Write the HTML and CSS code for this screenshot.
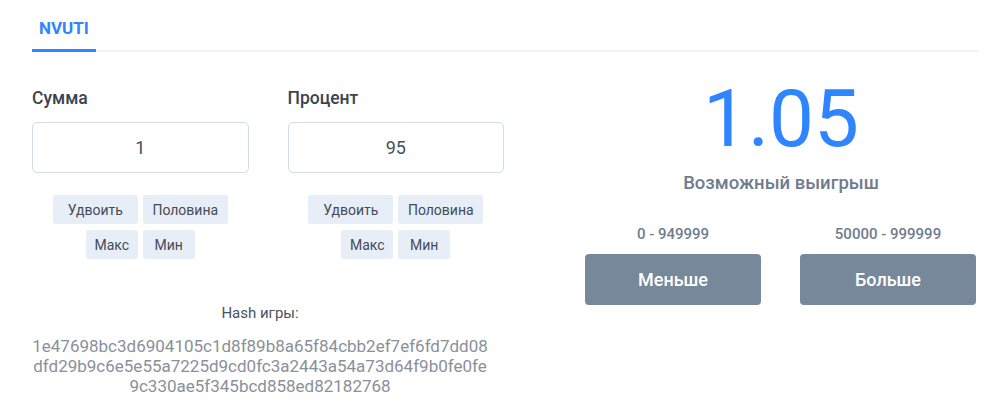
FILE: index.html
```html
<!DOCTYPE html>
<html lang="ru">
<head>
<meta charset="utf-8">
<title>NVUTI</title>
<link rel="stylesheet" href="styles.css">
</head>
<body>
<div class="page">
  <nav class="tabs">
    <a class="tab active">NVUTI</a>
  </nav>
  <main class="main">
    <section class="left">
      <div class="fields">
        <div class="field">
          <div class="label">Сумма</div>
          <div class="input">1</div>
          <div class="quick">
            <button class="qbtn wide">Удвоить</button>
            <button class="qbtn wide">Половина</button>
            <button class="qbtn narrow">Макс</button>
            <button class="qbtn narrow">Мин</button>
          </div>
        </div>
        <div class="field">
          <div class="label">Процент</div>
          <div class="input">95</div>
          <div class="quick">
            <button class="qbtn wide">Удвоить</button>
            <button class="qbtn wide">Половина</button>
            <button class="qbtn narrow">Макс</button>
            <button class="qbtn narrow">Мин</button>
          </div>
        </div>
      </div>
      <div class="hash">
        <div class="hash-label">Hash игры:</div>
        <div class="hash-value">1e47698bc3d6904105c1d8f89b8a65f84cbb2ef7ef6fd7dd08<br>dfd29b9c6e5e55a7225d9cd0fc3a2443a54a73d64f9b0fe0fe<br>9c330ae5f345bcd858ed82182768</div>
      </div>
    </section>
    <section class="right">
      <div class="win">1.05</div>
      <div class="win-label">Возможный выигрыш</div>
      <div class="bets">
        <div class="bet">
          <div class="range">0 - 949999</div>
          <button class="play">Меньше</button>
        </div>
        <div class="bet">
          <div class="range">50000 - 999999</div>
          <button class="play">Больше</button>
        </div>
      </div>
    </section>
  </main>
</div>
</body>
</html>
```
FILE: styles.css
```css
* { box-sizing: border-box; }
html, body { margin: 0; background: #fff; }
body {
  font-family: Roboto, "Noto Sans", "Liberation Sans", sans-serif;
  color: #3b4350;
}
.page {
  padding: 0 19px 0 32px;
}
.tabs {
  display: flex;
  border-bottom: 2px solid #edf3fd;
}
.tab {
  display: block;
  padding: 17px 7px 10px;
  font-size: 17px;
  line-height: 22px;
  font-weight: 700;
  color: #2f84ff;
  border-bottom: 3px solid #2f84ff;
  margin-bottom: -2px;
}
.main {
  display: flex;
  gap: 81px;
}
.left {
  width: 472px;
  padding-top: 36px;
}
.fields {
  display: flex;
  gap: 39px;
}
.field {
  width: 217px;
}
.label {
  font-size: 17.5px;
  line-height: 20px;
  font-weight: 500;
  color: #3b4350;
  margin-bottom: 14px;
}
.input {
  height: 51px;
  border: 1px solid #d3dce9;
  border-radius: 5px;
  display: flex;
  align-items: center;
  justify-content: center;
  font-size: 18px;
  color: #495057;
}
.quick {
  margin-top: 22px;
  display: grid;
  grid-template-columns: 1fr 1fr;
  column-gap: 5px;
  row-gap: 6px;
}
.qbtn {
  height: 29px;
  border: 0;
  border-radius: 3px;
  background: #e8eef8;
  color: #434b57;
  font-family: inherit;
  font-size: 14px;
  padding: 0;
  text-align: center;
}
.qbtn.wide { width: 85px; }
.qbtn.narrow { width: 52px; }
.quick .qbtn:nth-child(odd) { justify-self: end; }
.quick .qbtn:nth-child(even) { justify-self: start; }
.hash {
  margin-top: 44px;
  margin-right: 16px;
  text-align: center;
}
.hash-label {
  font-size: 15px;
  line-height: 20px;
  color: #4a5260;
}
.hash-value {
  margin-top: 13px;
  font-size: 17px;
  line-height: 20px;
  color: #8a9099;
}
.right {
  width: 392px;
  padding-top: 27px;
  text-align: center;
}
.win {
  font-size: 80px;
  line-height: 80px;
  color: #2f84ff;
}
.win-label {
  margin-top: 14px;
  font-size: 18.5px;
  line-height: 20px;
  font-weight: 500;
  color: #6f7c8c;
}
.bets {
  margin-top: 31px;
  display: flex;
  gap: 39px;
}
.bet {
  width: 176px;
}
.range {
  font-size: 15px;
  line-height: 20px;
  font-weight: 500;
  color: #6f7c8c;
  margin-bottom: 10px;
}
.play {
  width: 176px;
  height: 51px;
  border: 0;
  border-radius: 4px;
  background: #76889a;
  color: #fff;
  font-family: inherit;
  font-size: 18px;
  font-weight: 500;
}
```
